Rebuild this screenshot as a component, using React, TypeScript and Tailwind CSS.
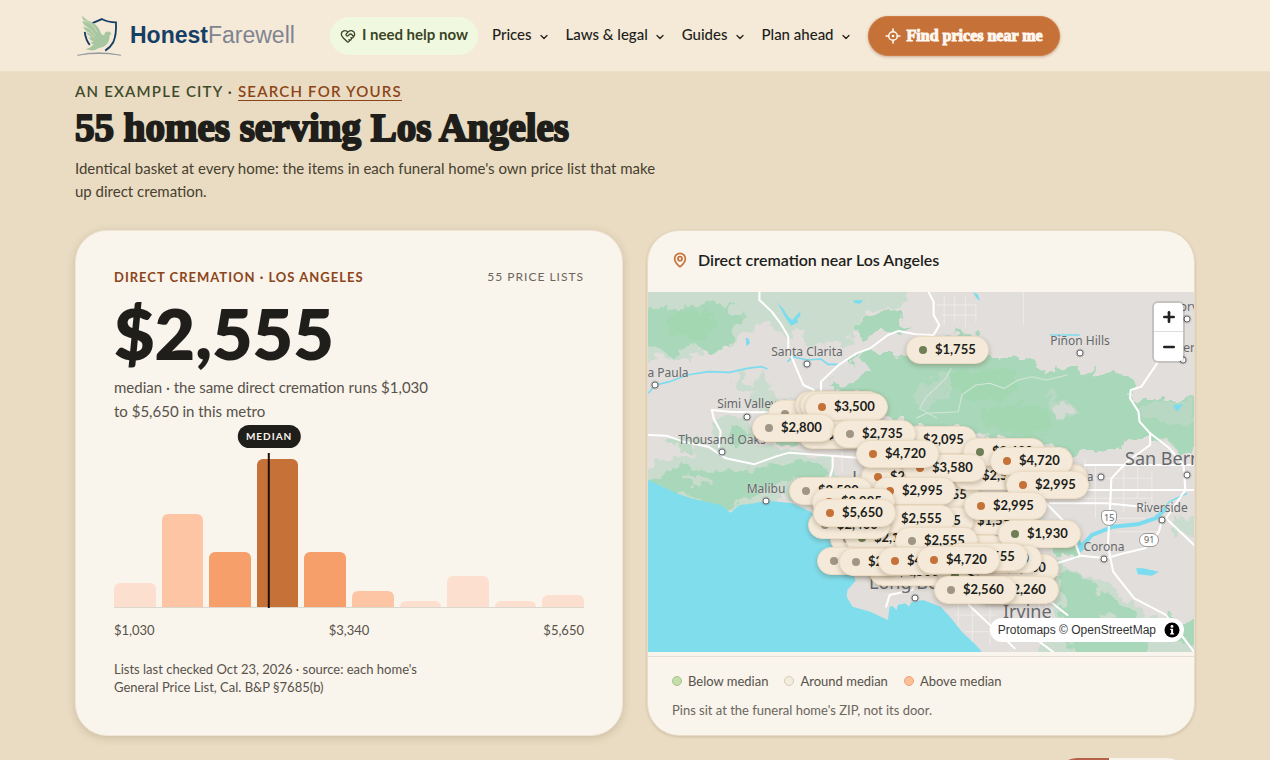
import { ChevronDown, HeartHandshake, MapPin, Minus, Plus } from "lucide-react";
import clsx from "clsx";

type Tone = "below" | "around" | "above";

interface Pin {
  x: number;
  y: number;
  price: string;
  tone: Tone;
}

const NAV_ITEMS = ["Prices", "Laws & legal", "Guides", "Plan ahead"];

const BARS = [
  { height: 24, color: "bg-[#fddfcf]" },
  { height: 93, color: "bg-[#fdc5a4]" },
  { height: 55, color: "bg-[#f69f6a]" },
  { height: 148, color: "bg-[#c67138]" },
  { height: 55, color: "bg-[#f69f6a]" },
  { height: 16, color: "bg-[#fdc5a4]" },
  { height: 6, color: "bg-[#fddfcf]" },
  { height: 31, color: "bg-[#fddfcf]" },
  { height: 6, color: "bg-[#fddfcf]" },
  { height: 12, color: "bg-[#fddfcf]" },
];

const LEGEND = [
  { label: "Below median", dot: "bg-[#c5dcab] border-[#a9c48d]" },
  { label: "Around median", dot: "bg-[#f3ecdd] border-[#d5cfba]" },
  { label: "Above median", dot: "bg-[#fdbf98] border-[#eda375]" },
];

const TONE_DOT: Record<Tone, string> = {
  below: "bg-[#6f7f55]",
  around: "bg-[#a09685]",
  above: "bg-[#c67138]",
};

// Later pins are painted over earlier ones.
const PINS: Pin[] = [
  { x: 258, y: 44, price: "$1,755", tone: "below" },
  { x: 120, y: 108, price: "$2,740", tone: "around" },
  { x: 147, y: 99, price: "$2,650", tone: "around" },
  { x: 152, y: 99, price: "$2,700", tone: "around" },
  { x: 157, y: 101, price: "$3,500", tone: "above" },
  { x: 150, y: 129, price: "$2,600", tone: "around" },
  { x: 246, y: 134, price: "$2,095", tone: "below" },
  { x: 104, y: 122, price: "$2,800", tone: "around" },
  { x: 185, y: 128, price: "$2,735", tone: "around" },
  { x: 213, y: 171, price: "$2,995", tone: "above" },
  { x: 249, y: 189, price: "$2,555", tone: "around" },
  { x: 305, y: 170, price: "$2,555", tone: "around" },
  { x: 315, y: 146, price: "$2,430", tone: "below" },
  { x: 255, y: 162, price: "$3,580", tone: "above" },
  { x: 208, y: 148, price: "$4,720", tone: "above" },
  { x: 357, y: 172, price: "$2,145", tone: "below" },
  { x: 342, y: 155, price: "$4,720", tone: "above" },
  { x: 358, y: 179, price: "$2,995", tone: "above" },
  { x: 225, y: 185, price: "$2,995", tone: "above" },
  { x: 300, y: 215, price: "$1,595", tone: "below" },
  { x: 243, y: 215, price: "$2,555", tone: "around" },
  { x: 316, y: 200, price: "$2,995", tone: "above" },
  { x: 182, y: 233, price: "$2,300", tone: "around" },
  { x: 197, y: 232, price: "$2,195", tone: "below" },
  { x: 224, y: 213, price: "$2,555", tone: "around" },
  { x: 160, y: 219, price: "$2,400", tone: "around" },
  { x: 141, y: 185, price: "$2,590", tone: "around" },
  { x: 164, y: 196, price: "$2,995", tone: "above" },
  { x: 165, y: 207, price: "$5,650", tone: "above" },
  { x: 275, y: 243, price: "$2,110", tone: "below" },
  { x: 247, y: 235, price: "$2,555", tone: "around" },
  { x: 350, y: 228, price: "$1,930", tone: "below" },
  { x: 221, y: 266, price: "$2,500", tone: "around" },
  { x: 290, y: 270, price: "$2,200", tone: "below" },
  { x: 328, y: 262, price: "$2,230", tone: "below" },
  { x: 311, y: 253, price: "$2,450", tone: "around" },
  { x: 297, y: 251, price: "$2,555", tone: "around" },
  { x: 169, y: 255, price: "$2,600", tone: "around" },
  { x: 191, y: 256, price: "$2,690", tone: "around" },
  { x: 230, y: 255, price: "$4,720", tone: "above" },
  { x: 269, y: 254, price: "$4,720", tone: "above" },
  { x: 328, y: 284, price: "$2,260", tone: "below" },
  { x: 286, y: 284, price: "$2,560", tone: "around" },
];

const PLACES = [
  { name: "Santa Clarita", x: 159, y: 60, dotX: 159, dotY: 72 },
  { name: "a Paula", x: 20, y: 81, dotX: 7, dotY: 93 },
  { name: "Simi Valley", x: 99, y: 112, dotX: 99, dotY: 125 },
  { name: "Thousand Oaks", x: 74, y: 148, dotX: 74, dotY: 160 },
  { name: "Malibu", x: 118, y: 197, dotX: 118, dotY: 209 },
  { name: "Piñon Hills", x: 432, y: 49, dotX: 432, dotY: 61 },
  { name: "Riverside", x: 514, y: 216, dotX: 514, dotY: 228 },
  { name: "Corona", x: 456, y: 255, dotX: 456, dotY: 267 },
  { name: "orv", x: 541, y: 15, dotX: 539, dotY: 27 },
  { name: "er", x: 541, y: 56, dotX: 535, dotY: 68 },
  { name: "a", x: 442, y: 185, dotX: 453, dotY: 185 },
];

const BIG_PLACES = [
  { name: "San Bernardino", x: 477, y: 166 },
  { name: "Irvine", x: 355, y: 319 },
  { name: "Long Beach", x: 221, y: 290 },
  { name: "Los Angeles", x: 204, y: 185 },
];

const BIG_DOTS = [
  { x: 267, y: 306 },
  { x: 539, y: 183 },
];

function Logo() {
  return (
    <svg viewBox="20 20 134 128" className="h-[43px] w-[45px] shrink-0" aria-hidden="true">
      <g fill="none" stroke="#163f66" strokeWidth="5.5">
        <path d="M66 47 L94 35 Q112 45 136 45 Q138 82 128 104 Q119 120 104 129" />
        <path d="M43 73 Q46 97 58 112" />
      </g>
      <path
        fill="#a7c7a0"
        d="M35 24 Q44 38 65 45 Q84 54 91 77 Q96 84 101 83 Q102 72 111 72 Q119 72 123 79 L117 83 Q118 101 106 113 Q97 121 83 122 Q74 133 45 125 Q59 122 70 111 Q64 109 61 103 L70 102 Q60 99 54 89 L64 90 Q53 85 47 74 L58 77 Q43 70 38 57 L54 63 Q36 51 36 40 L52 50 Q35 39 35 24Z"
      />
      <g fill="none" stroke="#f6ead9" strokeWidth="1.5">
        <path d="M43 38 Q67 48 80 75 M42 53 Q63 65 75 84 M52 74 Q62 79 72 91" />
      </g>
      <path fill="#7d8a93" d="M21 143 Q85 127 151 143 Q85 132 21 143Z" stroke="#7d8a93" strokeWidth="1.5" />
    </svg>
  );
}

function CrosshairIcon() {
  return (
    <svg viewBox="0 0 16 16" className="size-4" fill="none" stroke="currentColor" strokeLinecap="round" aria-hidden="true">
      <circle cx="8" cy="8" r="4.3" strokeWidth="1.5" />
      <path strokeWidth="1.7" d="M8 1.2v2.4M8 12.4v2.4M1.2 8h2.4M12.4 8h2.4" />
      <circle cx="8" cy="8" r="1.3" fill="currentColor" stroke="none" />
    </svg>
  );
}

function Header() {
  return (
    <header className="border-b border-[#eddfc8] bg-[#f5e9d8]">
      <div className="mx-auto flex h-[71px] max-w-[1120px] items-center">
        <a href="#" className="ml-0.5 flex items-center gap-2 font-['Liberation_Sans',sans-serif] text-[23px] leading-7">
          <Logo />
          <span className="pb-0.5 text-[#7f8490]">
            <b className="text-[#163f66]">Honest</b>Farewell
          </span>
        </a>
        <a
          href="#"
          className="ml-[35px] flex h-[38px] items-center gap-1.5 rounded-full bg-[#f0f9df] px-2.5 text-[15px] font-bold text-[#3b4526]"
        >
          <HeartHandshake className="size-4" strokeWidth={2} aria-hidden="true" />
          <span className="pb-0.5">I need help now</span>
        </a>
        <nav className="ml-3.5 flex items-center gap-4 pb-0.5 text-[15px] font-medium text-[#201e1b]">
          {NAV_ITEMS.map((item) => (
            <button key={item} type="button" className="flex items-center gap-1.5">
              {item}
              <ChevronDown className="mt-1 size-3" strokeWidth={2.5} aria-hidden="true" />
            </button>
          ))}
        </nav>
        <button
          type="button"
          className="ml-4 flex h-10 items-center gap-1.5 rounded-full border border-[#d07c43] bg-[#c67138] px-4 font-['Liberation_Serif',serif] text-base font-bold whitespace-nowrap text-[#fff8f0] shadow-[0_1px_3px_rgba(120,60,20,0.35)] [-webkit-text-stroke:1px]"
        >
          <CrosshairIcon />
          Find prices near me
        </button>
      </div>
    </header>
  );
}

function PriceCard() {
  return (
    <section className="rounded-[32px] border border-[#f1e6d6] bg-[#f9f4ec] px-[38px] pt-9 pb-[39px] text-[#57524a] shadow-[0_2px_8px_rgba(90,70,40,0.2)]">
      <div className="flex items-center justify-between leading-5">
        <h2 className="text-[13px] font-bold tracking-[1px] text-[#8c4519]">DIRECT CREMATION · LOS ANGELES</h2>
        <span className="text-xs leading-5 tracking-[1px] text-[#6b665d]">55 PRICE LISTS</span>
      </div>
      <p className="mt-2.5 text-[70px] leading-[72px] font-extrabold text-[#201e1b]">$2,555</p>
      <p className="mt-1.5 max-w-[330px] text-[15px] leading-6">
        median · the same direct cremation runs $1,030 to $5,650 in this metro
      </p>

      <div className="relative pt-9">
        <div className="flex h-[149px] items-end gap-1.5 border-b border-[#dcd7cd]">
          {BARS.map((bar, i) => (
            <div key={i} className={clsx("flex-1 rounded-t-md", bar.color)} style={{ height: bar.height }} />
          ))}
        </div>
        <div className="absolute top-0.5 bottom-0 left-[33%] flex -translate-x-1/2 flex-col items-center">
          <span className="rounded-full bg-[#201e1b] px-2 text-[10px] leading-[23px] font-bold tracking-[1px] text-[#f9f4ec]">
            MEDIAN
          </span>
          <span className="mt-[5px] w-0.5 flex-1 bg-[#201008]" />
        </div>
      </div>

      <div className="mt-3 flex justify-between text-[13px] leading-5">
        <span>$1,030</span>
        <span>$3,340</span>
        <span>$5,650</span>
      </div>
      <p className="mt-5 max-w-[320px] text-[13px] leading-[18px]">
        Lists last checked Oct 23, 2026 · source: each home's General Price List, Cal. B&amp;P §7685(b)
      </p>
    </section>
  );
}

function Terrain() {
  return (
    <svg
      viewBox="0 0 546 360"
      preserveAspectRatio="xMinYMin slice"
      className="absolute inset-0 size-full"
      aria-hidden="true"
    >
      <defs>
        {/* breaks up straight outlines of the vegetation */}
        <filter id="ragged" x="-5%" y="-5%" width="110%" height="110%">
          <feTurbulence type="fractalNoise" baseFrequency="0.07" numOctaves="3" seed="4" />
          <feDisplacementMap in="SourceGraphic" scale="22" xChannelSelector="R" yChannelSelector="G" />
        </filter>
      </defs>
      <rect width="546" height="360" fill="#e1dedb" />
      <g filter="url(#ragged)">
        <g transform="translate(-3 -7) scale(0.352 0.3333)">
          {/* pale parkland */}
          <g fill="#c9dccd">
            <path d="M-40 -20H760L735 50 690 75 640 80 590 130 560 190 520 175 470 180 440 140 410 150 350 110 330 130 290 135 240 190 170 180 130 230 70 215 -40 240Z" />
            <path d="M190 400 240 390 300 420 330 470 400 495 530 510 535 560 590 590 560 620 400 640 240 680 120 660 -20 590 40 520 150 500 200 470Z" />
            <path d="M1170 820 1240 860 1310 900 1400 960 1440 1000 1600 1040V1140H1100L1180 1000 1160 900Z" />
            <path d="M1440 370 1600 360V510L1480 490 1430 440Z" />
            <path d="M1500 700 1600 690V760L1500 750Z" />
            <path d="M300 330 350 310 400 350 420 400 380 420 320 380Z" />
            <path d="M250 270 300 290 330 270 370 300 330 330 270 310Z" />
          </g>
          {/* forest */}
          <g fill="#a9d7b9">
            <path d="M-30 90 60 60 100 75 150 50 230 60 280 90 250 140 235 185 190 210 120 175 100 215 40 200 -30 160Z" />
            <path d="M530 270 570 255 590 220 630 205 760 215 960 208 1120 220V250H1285V268H1375L1385 320 1410 345H1600V520L1480 480 1440 450 1380 470 1330 500 1240 505 1180 490 1130 470 960 450 880 430 760 420 690 390 620 330 560 330 520 300Z" />
            <path d="M590 120 650 90 720 75 730 110 770 130 650 140 610 160Z" />
            <path d="M865 142H940V156H865Z" />
            <path d="M20 590 70 560 130 545 190 545 230 560 330 555 400 535 480 530 520 560 505 590 410 590 330 620 290 640 240 675 140 650 80 625Z" />
            <path d="M230 420 280 430 300 460 260 490 230 470Z" />
            <path d="M330 400 400 430 440 470 400 480 350 450Z" />
            <path d="M1175 850 1230 860 1300 920 1360 960 1420 1040 1440 1140H1240L1200 1050 1185 960Z" />
            <path d="M1150 770 1230 780 1230 820 1160 810Z" />
            <path d="M1480 1000 1600 1020V1080L1500 1060Z" />
            <path d="M60 470 110 450 180 480 130 500Z" opacity="0.6" />
          </g>
          <g fill="#9fd8ad" opacity="0.55">
            <path d="M60 90 150 70 200 110 180 170 110 160 70 150Z" />
            <path d="M850 260 1000 250 1080 300 1000 350 860 320 820 290Z" />
            <path d="M950 370 1110 360 1180 420 1100 450 980 430Z" />
          </g>
          <g fill="#bfd9c8" opacity="0.7">
            <path d="M780 290 870 260 860 330 800 370 760 350Z" />
            <path d="M1130 320 1200 350 1230 400 1190 410 1150 370Z" />
            <path d="M1390 370 1470 350 1560 350V420L1480 420 1430 400Z" />
          </g>
          {/* valleys */}
          <g fill="#dfdddb">
            <path d="M1160 360 1190 350 1210 400 1180 400Z" opacity="0.7" />
            <path d="M560 250 620 215 630 260 560 300 520 310 520 280Z" />
            <path d="M110 570 160 565 180 590 140 600Z" opacity="0.6" />
            <path d="M1300 980 1370 1020 1340 1060 1290 1040Z" opacity="0.6" />
          </g>
        </g>
      </g>
      <g transform="translate(-3 -7) scale(0.352 0.3333)">
        {/* built-up grid */}
        <g fill="none" stroke="#edebe8" strokeWidth="3">
          <path d="M850 30V120M880 30V110M910 30V130M940 60V110M830 60H940M840 90H940M1075 20V120" />
          <path d="M560 500V560M1250 520V640M1280 540V700M1360 540V680M1400 540V640M1440 560V680M1200 580H1440M1240 640H1440M1290 700H1420M1340 740H1460" />
          <path d="M890 950V1060M930 970V1090M980 960V1080M880 990H1000M910 1040H1010M1120 920V1000M1140 880V980" />
        </g>
        <g fill="none" stroke="#d3e6d8" strokeWidth="3">
          <path d="M870 250 855 280 800 335 780 370 830 400M770 400 800 385 890 380 900 330 940 300 980 295 1020 310 1060 285 1100 275 1140 285 1200 270" />
        </g>
        {/* ocean */}
        <path
          fill="#80deec"
          d="M0 580 60 610 90 625 130 640 180 652 215 660 243 683 270 660 310 655 350 647 420 655 470 680 520 740 560 790 590 850 598 888 575 915 573 935 590 965 640 980 690 1005 695 965 740 955 790 945 840 965 870 1000 900 1040 940 1080 965 1110H0Z"
        />
        <path fill="#e1dedb" d="M700 960 720 950 715 975ZM735 950 760 945 750 965Z" />
        <g fill="none" stroke="#7cdcef">
          <path strokeWidth="5" d="M9 325 30 300 70 290 120 270 180 260 240 262 290 250 330 245 348 252M405 230 420 215 460 225 500 222 520 238 548 238" />
          <path strokeWidth="12" d="M1235 790 1270 750 1330 725 1400 718 1450 700 1480 670" />
          <path strokeWidth="4" d="M1450 700 1490 650 1540 625M1150 150H1235" />
        </g>
        <path
          fill="#7cdcef"
          d="M375 50 395 75 405 92 418 105 440 80 442 92 432 102 435 112 415 122 400 100ZM932 22 945 28 952 48 942 40ZM286 158 294 160 298 175 288 184ZM590 46 620 46 612 56 596 54Z"
        />
        <path fill="#7cdcef" d="M1395 850 1415 850 1460 860 1440 872 1400 868ZM1500 360 1530 358 1510 380ZM1225 750 1250 790 1235 805Z" />
        {/* highways */}
        <g fill="none" stroke="#fff" strokeWidth="6" strokeLinejoin="round" strokeLinecap="round">
          <path d="M325 20V45L360 80 385 115 407 155V190L430 250 450 300 480 315" />
          <path d="M500 330V290L550 240 600 205 640 190 690 150 720 138 770 148 820 150 836 120 820 90V50L805 20" />
          <path d="M0 450 60 452 110 470 180 485 230 520 310 538 370 515 410 503 530 512 620 520" />
          <path d="M210 485 215 440 195 400 190 375 240 380 300 382 360 382" />
          <path d="M533 512V550L523 585" />
          <path d="M1455 235 1410 305 1380 315 1378 340 1402 380 1405 410 1435 445 1490 490 1530 540 1535 615 1480 700 1560 780" />
          <path d="M1435 445V480L1370 530 1325 580 1322 650 1315 780 1330 860 1390 940 1480 990 1560 1101" />
          <path d="M1250 540H1560M1250 615H1560M1150 655H1310L1440 668" />
          <path d="M1170 835 1240 812 1310 820 1360 805 1420 790 1460 740 1470 700" />
          <path d="M1140 655 1200 720 1235 810M1170 835V870M1200 990 1140 940" />
          <path d="M920 960 970 1010 1050 1090M1120 1070 1160 1101M685 965 695 930 760 915 770 890" />
        </g>
      </g>
    </svg>
  );
}

function PlaceDot({ x, y }: { x: number; y: number }) {
  return (
    <span
      className="absolute size-[7px] -translate-x-1/2 -translate-y-1/2 rounded-full border border-[#66686b] bg-white ring-1 ring-[#66686b]/25"
      style={{ left: x, top: y }}
    />
  );
}

function MapLabels() {
  return (
    <div className="font-['Noto_Sans',sans-serif] whitespace-nowrap text-[#66686b] [text-shadow:0_0_2px_#e6e4e1]">
      {PLACES.map((place) => (
        <div key={place.name}>
          <span
            className="absolute -translate-x-1/2 -translate-y-1/2 text-xs leading-4"
            style={{ left: place.x, top: place.y }}
          >
            {place.name}
          </span>
          <PlaceDot x={place.dotX} y={place.dotY} />
        </div>
      ))}
      {BIG_PLACES.map((place) => (
        <span
          key={place.name}
          className="absolute -translate-y-1/2 text-lg leading-6"
          style={{ left: place.x, top: place.y }}
        >
          {place.name}
        </span>
      ))}
      {BIG_DOTS.map((dot) => (
        <PlaceDot key={dot.x} x={dot.x} y={dot.y} />
      ))}
      <span className="absolute top-[218px] left-[453px] rounded-b-lg rounded-t-sm border border-[#999] bg-white px-0.5 text-[9px] leading-[14px]">
        15
      </span>
      <span className="absolute top-[241px] left-[491px] rounded-full border border-[#999] bg-white px-1 text-[9px] leading-3">
        91
      </span>
    </div>
  );
}

function PricePin({ pin }: { pin: Pin }) {
  return (
    <button
      type="button"
      className="absolute flex h-7 items-center gap-2 rounded-full border border-[#ecdcc4] bg-[#f5ead9] px-3 text-[13px] font-bold text-[#201e1b] shadow-[0_2px_5px_rgba(70,50,30,0.28)]"
      style={{ left: pin.x, top: pin.y }}
    >
      <span className={clsx("size-2 rounded-full", TONE_DOT[pin.tone])} />
      {pin.price}
    </button>
  );
}

function MapCard() {
  return (
    <section className="flex flex-col overflow-hidden rounded-[32px] border border-[#e9dcc6] bg-[#f9f4ec] text-[#57524a] shadow-[0_1px_3px_rgba(90,70,40,0.2)]">
      <h2 className="flex h-[61px] items-center gap-2.5 px-6 pb-1 text-base font-semibold text-[#201e1b]">
        <MapPin className="size-4 text-[#c67138]" strokeWidth={2.5} aria-hidden="true" />
        Direct cremation near Los Angeles
      </h2>
      <div className="relative isolate h-[360px] overflow-hidden">
        <Terrain />
        <MapLabels />
        {PINS.map((pin, i) => (
          <PricePin key={i} pin={pin} />
        ))}
        <div className="absolute top-[11px] right-[11px] flex w-[29px] flex-col divide-y divide-[#ddd] rounded bg-white text-[#222] shadow-[0_0_0_2px_rgba(0,0,0,0.12)]">
          <button type="button" aria-label="Zoom in" className="flex h-[29px] items-center justify-center">
            <Plus className="size-4" strokeWidth={4} />
          </button>
          <button type="button" aria-label="Zoom out" className="flex h-[29px] items-center justify-center">
            <Minus className="size-4" strokeWidth={4} />
          </button>
        </div>
        <div className="absolute right-2.5 bottom-2.5 flex h-6 items-center gap-2 rounded-full bg-white pr-1 pl-2 font-['Liberation_Sans',sans-serif] text-xs text-[#333]">
          <span>
            <a href="#">Protomaps</a> © <a href="#">OpenStreetMap</a>
          </span>
          <svg viewBox="0 0 16 16" className="size-4" aria-hidden="true">
            <circle cx="8" cy="8" r="7.5" fill="#000" />
            <circle cx="8" cy="4.4" r="1.4" fill="#fff" />
            <path d="M6.2 6.8h2.9v4.4h1v1.3H6.1v-1.3h1V8.1h-.9Z" fill="#fff" />
          </svg>
        </div>
      </div>
      <div className="mt-1 flex-1 border-t border-[#e4ded3] px-6 pt-3.5 text-[13px] leading-5">
        <ul className="flex gap-4">
          {LEGEND.map((item) => (
            <li key={item.label} className="flex items-center gap-1.5">
              <span className={clsx("size-2.5 rounded-full border", item.dot)} />
              {item.label}
            </li>
          ))}
        </ul>
        <p className="mt-[9px] text-[#6b665d]">Pins sit at the funeral home's ZIP, not its door.</p>
      </div>
    </section>
  );
}

export default function App() {
  return (
    <div className="h-screen overflow-hidden bg-[#e9dcc2] font-[Lato,sans-serif]">
      <Header />
      <main className="mx-auto max-w-[1120px] pt-[9px]">
        <p className="text-[15px] leading-5 font-semibold tracking-[1.2px] text-[#3f4a2c]">
          AN EXAMPLE CITY ·{" "}
          <a href="#" className="border-b border-[#8c4519] text-[#8c4519]">
            SEARCH FOR YOURS
          </a>
        </p>
        <h1 className="mt-1.5 font-['Liberation_Serif',serif] text-[39px] leading-[42px] font-bold text-[#201e1b] [-webkit-text-stroke:2px]">
          55 homes serving Los Angeles
        </h1>
        <p className="mt-2 max-w-[600px] text-[15px] leading-[23px] text-[#474030]">
          Identical basket at every home: the items in each funeral home's own price list that make up direct cremation.
        </p>
        <div className="mt-[27px] grid grid-cols-2 gap-6">
          <PriceCard />
          <MapCard />
        </div>
        <div className="mt-[22px] mr-2 ml-auto flex h-10 w-[130px] overflow-hidden rounded-full bg-[#f9f4ec]">
          <div className="w-2/5 bg-[#b5614a]" />
        </div>
      </main>
    </div>
  );
}
